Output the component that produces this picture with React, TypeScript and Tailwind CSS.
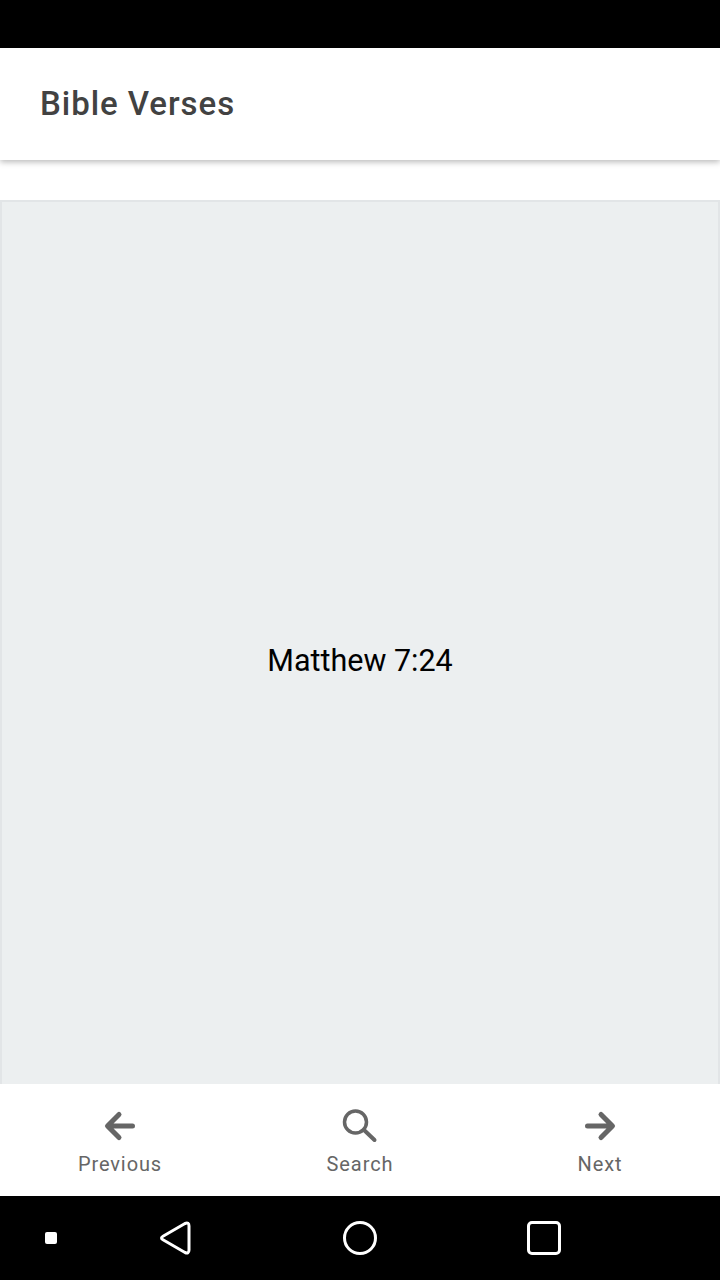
import { ReactNode } from 'react';

interface NavItemProps {
  label: string;
  icon: ReactNode;
}

function NavItem({ label, icon }: NavItemProps) {
  return (
    <div className="flex flex-col items-center justify-start flex-1 pt-[24px]">
      <svg width="36" height="36" viewBox="0 0 36 36" fill="none" stroke="#666666" strokeWidth="5" strokeLinecap="round" strokeLinejoin="round">
        {icon}
      </svg>
      <div className="text-[20px] leading-[24px] tracking-[0.9px] text-[#666666] mt-[8px]">{label}</div>
    </div>
  );
}

export default function App() {
  return (
    <div className="w-[720px] h-[1280px] flex flex-col bg-white overflow-hidden font-['Roboto',sans-serif]">
      <div className="h-[48px] bg-black" />
      <div className="h-[112px] bg-white flex items-center px-[40px] shadow-[0_2px_6px_rgba(0,0,0,0.28)] z-10">
        <span className="text-[33px] font-medium tracking-[0.95px] text-[#424242]">Bible Verses</span>
      </div>
      <div className="h-[40px] bg-white" />
      <div className="h-[884px] bg-[#eceff0] border-2 border-b-0 border-[#e2e5e7] flex items-center justify-center pt-[36px]">
        <span className="text-[30.5px] text-black leading-none">Matthew 7:24</span>
      </div>
      <div className="h-[112px] bg-white flex">
        <NavItem label="Previous" icon={<path d="M30.5 18H6M17 6.5L5.5 18L17 29.5" />} />
        <NavItem
          label="Search"
          icon={
            <>
              <circle cx="13.5" cy="14" r="11" strokeWidth="3.5" />
              <path d="M22 22L32.5 32" strokeWidth="4" />
            </>
          }
        />
        <NavItem label="Next" icon={<path d="M5.5 18H30M19 6.5L30.5 18L19 29.5" />} />
      </div>
      <div className="h-[84px] bg-black flex items-center">
        <div className="w-[12px] h-[12px] bg-white rounded-[2px] ml-[45px]" />
        <svg className="ml-[101px]" width="34" height="36" viewBox="0 0 34 36" fill="none" stroke="white" strokeWidth="3" strokeLinejoin="round">
          <path d="M5 16.2L27 3.5Q31 1.8 31 6V30Q31 34 27 32.5L5 19.8Q2 18 5 16.2Z" />
        </svg>
        <div className="ml-[151px] w-[34px] h-[34px] rounded-full border-[3px] border-white" />
        <div className="ml-[150px] w-[34px] h-[34px] rounded-[5px] border-[3px] border-white" />
      </div>
    </div>
  );
}
